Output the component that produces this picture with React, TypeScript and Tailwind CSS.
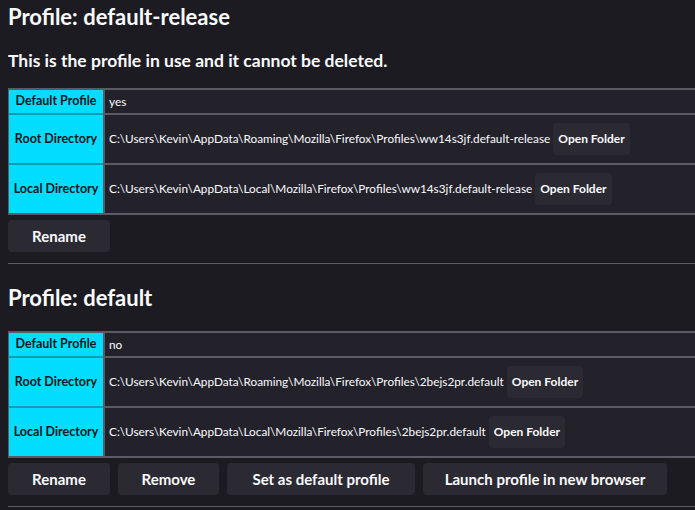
type Row = { label: string; value: string; folder?: boolean }

type Profile = {
  name: string
  note?: string
  rows: Row[]
  actions: { label: string; width: string }[]
}

const profiles: Profile[] = [
  {
    name: 'default-release',
    note: 'This is the profile in use and it cannot be deleted.',
    rows: [
      { label: 'Default Profile', value: 'yes' },
      {
        label: 'Root Directory',
        value: 'C:\\Users\\Kevin\\AppData\\Roaming\\Mozilla\\Firefox\\Profiles\\ww14s3jf.default-release',
        folder: true,
      },
      {
        label: 'Local Directory',
        value: 'C:\\Users\\Kevin\\AppData\\Local\\Mozilla\\Firefox\\Profiles\\ww14s3jf.default-release',
        folder: true,
      },
    ],
    actions: [{ label: 'Rename', width: 'w-[102px]' }],
  },
  {
    name: 'default',
    rows: [
      { label: 'Default Profile', value: 'no' },
      {
        label: 'Root Directory',
        value: 'C:\\Users\\Kevin\\AppData\\Roaming\\Mozilla\\Firefox\\Profiles\\2bejs2pr.default',
        folder: true,
      },
      {
        label: 'Local Directory',
        value: 'C:\\Users\\Kevin\\AppData\\Local\\Mozilla\\Firefox\\Profiles\\2bejs2pr.default',
        folder: true,
      },
    ],
    actions: [
      { label: 'Rename', width: 'w-[102px]' },
      { label: 'Remove', width: 'w-[101px]' },
      { label: 'Set as default profile', width: 'w-[188px]' },
      { label: 'Launch profile in new browser', width: 'w-[244px]' },
    ],
  },
]

function ProfileTable({ rows }: { rows: Row[] }) {
  return (
    <div className="border-t-2 border-l border-[#5b5b66]">
      {rows.map((row, i) => {
        const last = i === rows.length - 1
        return (
          <div key={row.label} className="flex">
            <div
              className={`w-[94px] shrink-0 bg-[#00ddff] text-[#15141a] font-bold text-[12.5px] flex items-center justify-center border-b-2 ${
                last ? 'border-[#5b5b66]' : 'border-[#0c9db5]'
              } ${row.folder ? 'h-[50px]' : 'h-[25px]'}`}
            >
              {row.label}
            </div>
            <div className="flex-1 bg-[#23222b] border-l-2 border-b-2 border-[#5b5b66] flex items-center pl-[4px] text-[11.8px] text-[#fbfbfe]">
              <span>{row.value}</span>
              {row.folder && (
                <button className="ml-[3px] h-[32px] px-[5px] rounded-[4px] bg-[#2b2a33] font-bold text-[12px] text-[#fbfbfe]">
                  Open Folder
                </button>
              )}
            </div>
          </div>
        )
      })}
    </div>
  )
}

export default function App() {
  return (
    <div
      className="h-[510px] w-[695px] overflow-hidden bg-[#1c1b22] text-[#fbfbfe]"
      style={{ fontFamily: 'Lato, "Noto Sans", sans-serif' }}
    >
      <div className="w-[760px] pl-2">
        {profiles.map((p, idx) => (
          <div key={p.name}>
            <h2
              className={`text-[22px] leading-[26px] font-bold ${
                idx === 0 ? 'pt-[4px]' : 'pt-[21px]'
              }`}
            >
              Profile: {p.name}
            </h2>
            {p.note && (
              <h3 className="mt-[20px] text-[17.5px] leading-[21px] font-bold">{p.note}</h3>
            )}
            <div className={p.note ? 'mt-[17px]' : 'mt-[20px]'}>
              <ProfileTable rows={p.rows} />
            </div>
            <div className="flex gap-2 mt-[5px]">
              {p.actions.map((a) => (
                <button
                  key={a.label}
                  className={`${a.width} h-[32px] rounded-[4px] bg-[#2b2a33] font-bold text-[15px] text-[#fbfbfe]`}
                >
                  {a.label}
                </button>
              ))}
            </div>
            <hr className="mt-[11px] border-0 border-t border-[#5b5b66]" />
          </div>
        ))}
      </div>
    </div>
  )
}
